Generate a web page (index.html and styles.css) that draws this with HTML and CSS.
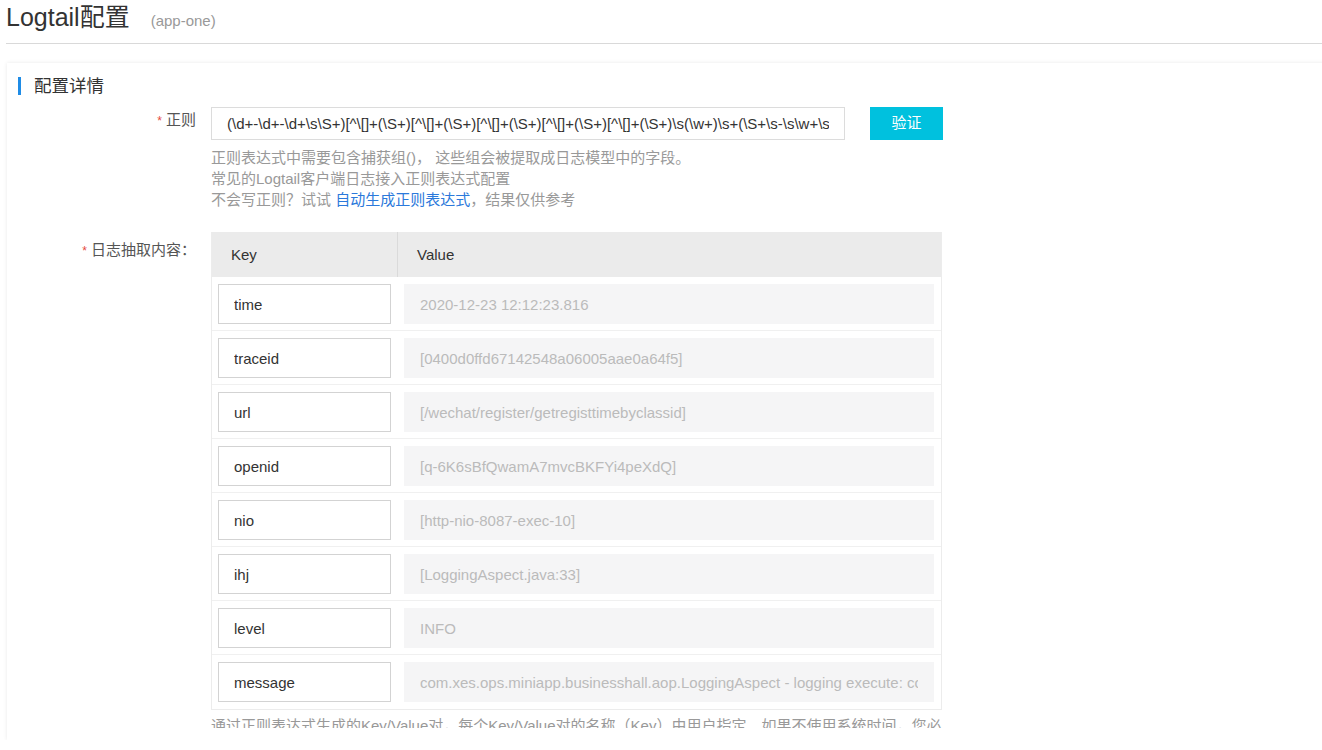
FILE: index.html
```html
<!DOCTYPE html>
<html lang="zh-CN">
<head>
<meta charset="utf-8">
<title>Logtail配置</title>
<link rel="stylesheet" href="styles.css">
</head>
<body>
<div class="page">
  <div class="title-bar">
    <h1 class="title">Logtail配置</h1>
    <span class="subtitle">(app-one)</span>
  </div>

  <div class="panel">
    <div class="panel-body">
      <div class="section-head">
        <span class="section-bar"></span>
        <span class="section-title">配置详情</span>
      </div>

      <div class="form-row">
        <div class="form-label label-regex"><span class="req">*</span> 正则</div>
        <div class="form-control">
          <div class="regex-line">
            <input class="regex-input" type="text" value="(\d+-\d+-\d+\s\S+)[^\[]+(\S+)[^\[]+(\S+)[^\[]+(\S+)[^\[]+(\S+)[^\[]+(\S+)\s(\w+)\s+(\S+\s-\s\w+\s.*)">
            <button class="btn-verify" type="button">验证</button>
          </div>
          <div class="help">
            <div>正则表达式中需要包含捕获组()， 这些组会被提取成日志模型中的字段。</div>
            <div>常见的Logtail客户端日志接入正则表达式配置</div>
            <div>不会写正则？试试 <a class="link" href="#">自动生成正则表达式</a>，结果仅供参考</div>
          </div>
        </div>
      </div>

      <div class="form-row row-table">
        <div class="form-label label-table"><span class="req">*</span> 日志抽取内容：</div>
        <div class="form-control">
          <div class="kv-table">
            <div class="kv-head">
              <div class="kv-hkey">Key</div>
              <div class="kv-hval">Value</div>
            </div>
            <div class="kv-row">
              <div class="kv-key"><input class="key-input" type="text" value="time"></div>
              <div class="kv-val"><input class="val-input" type="text" readonly value="2020-12-23 12:12:23.816"></div>
            </div>
            <div class="kv-row">
              <div class="kv-key"><input class="key-input" type="text" value="traceid"></div>
              <div class="kv-val"><input class="val-input" type="text" readonly value="[0400d0ffd67142548a06005aae0a64f5]"></div>
            </div>
            <div class="kv-row">
              <div class="kv-key"><input class="key-input" type="text" value="url"></div>
              <div class="kv-val"><input class="val-input" type="text" readonly value="[/wechat/register/getregisttimebyclassid]"></div>
            </div>
            <div class="kv-row">
              <div class="kv-key"><input class="key-input" type="text" value="openid"></div>
              <div class="kv-val"><input class="val-input" type="text" readonly value="[q-6K6sBfQwamA7mvcBKFYi4peXdQ]"></div>
            </div>
            <div class="kv-row">
              <div class="kv-key"><input class="key-input" type="text" value="nio"></div>
              <div class="kv-val"><input class="val-input" type="text" readonly value="[http-nio-8087-exec-10]"></div>
            </div>
            <div class="kv-row">
              <div class="kv-key"><input class="key-input" type="text" value="ihj"></div>
              <div class="kv-val"><input class="val-input" type="text" readonly value="[LoggingAspect.java:33]"></div>
            </div>
            <div class="kv-row">
              <div class="kv-key"><input class="key-input" type="text" value="level"></div>
              <div class="kv-val"><input class="val-input" type="text" readonly value="INFO"></div>
            </div>
            <div class="kv-row">
              <div class="kv-key"><input class="key-input" type="text" value="message"></div>
              <div class="kv-val"><input class="val-input" type="text" readonly value="com.xes.ops.miniapp.businesshall.aop.LoggingAspect - logging execute: com.xes.ops.miniapp.businesshall.controller"></div>
            </div>
          </div>
          <div class="help help-bottom">通过正则表达式生成的Key/Value对，每个Key/Value对的名称（Key）由用户指定。如果不使用系统时间，您必须指定一对Value为时间的Key/Value对，且Key必须为time。</div>
        </div>
      </div>
    </div>
  </div>
</div>
</body>
</html>
```

FILE: styles.css
```css
html, body {
  margin: 0;
  padding: 0;
  background: #fff;
  overflow: hidden;
}

body {
  font-family: "Liberation Sans", "Noto Sans CJK SC", Arial, sans-serif;
  font-size: 15px;
  color: #333;
}

.page {
  padding-left: 6px;
}

.title-bar {
  height: 44px;
  box-sizing: border-box;
  border-bottom: 1px solid #d9d9d9;
  display: flex;
  align-items: baseline;
}

.title {
  margin: 0;
  font-size: 25px;
  font-weight: normal;
  line-height: 34px;
  color: #333;
}

.subtitle {
  margin-left: 21px;
  font-size: 15px;
  color: #999;
}

.panel {
  margin-top: 19px;
  margin-left: 1px;
  margin-right: -8px;
  height: 677px;
  box-sizing: border-box;
  padding-bottom: 12px;
  background: #fff;
  box-shadow: 0 0 4px rgba(0, 0, 0, 0.09);
  display: flex;
  flex-direction: column;
}

.panel-body {
  flex: 1;
  overflow: hidden;
}

.section-head {
  display: flex;
  align-items: center;
  margin-top: 14px;
  padding-left: 11px;
  height: 18px;
}

.section-bar {
  width: 3px;
  height: 18px;
  background: #1f8ce6;
}

.section-title {
  margin-left: 13px;
  font-size: 17.5px;
  line-height: 18px;
  color: #333;
}

.form-row {
  display: flex;
  margin-top: 12px;
}

.row-table {
  margin-top: 22px;
}

.form-label {
  width: 204px;
  padding-right: 15px;
  box-sizing: border-box;
  flex: none;
  text-align: right;
  line-height: 20px;
  color: #555;
  white-space: nowrap;
}

.label-regex {
  padding-top: 3px;
}

.label-table {
  padding-top: 8px;
}

.req {
  color: #e5483d;
  font-size: 12px;
}

.form-control {
  flex: none;
}

.regex-line {
  display: flex;
}

.regex-input {
  width: 634px;
  height: 33px;
  box-sizing: border-box;
  border: 1px solid #dcdcdc;
  padding: 0 15px;
  font-family: inherit;
  font-size: 15px;
  color: #333;
  outline: none;
}

.btn-verify {
  margin-left: 25px;
  width: 73px;
  height: 33px;
  border: none;
  background: #00c1de;
  color: #fff;
  font-family: inherit;
  font-size: 15px;
  padding: 0 0 4px;
}

.help {
  margin-top: 7px;
  line-height: 21px;
  color: #999;
}

.link {
  color: #2b79db;
  text-decoration: none;
}

.kv-table {
  width: 731px;
  box-sizing: border-box;
  border: 1px solid #ececec;
  border-top: none;
}

.kv-head {
  display: flex;
  height: 45px;
  background: #ebebeb;
  line-height: 45px;
  color: #333;
}

.kv-hkey {
  width: 186px;
  padding-left: 19px;
  box-sizing: border-box;
  border-right: 1px solid #dadada;
}

.kv-hval {
  padding-left: 19px;
}

.kv-row {
  display: flex;
  height: 54px;
  box-sizing: border-box;
  padding: 7px 0;
  border-bottom: 1px solid #f0f0f0;
}

.kv-row:last-child {
  border-bottom: none;
}

.kv-key {
  width: 187px;
  padding-left: 6px;
  box-sizing: border-box;
}

.key-input {
  width: 173px;
  height: 40px;
  box-sizing: border-box;
  border: 1px solid #d3d3d3;
  padding: 0 15px;
  font-family: inherit;
  font-size: 15px;
  color: #333;
  outline: none;
}

.kv-val {
  padding-left: 5px;
}

.val-input {
  width: 530px;
  height: 40px;
  box-sizing: border-box;
  border: none;
  background: #f5f5f6;
  padding: 0 16px;
  font-family: inherit;
  font-size: 15px;
  color: #bbb;
  outline: none;
}

.help-bottom {
  margin-top: 5px;
  white-space: nowrap;
  width: 731px;
  overflow: hidden;
}
```
